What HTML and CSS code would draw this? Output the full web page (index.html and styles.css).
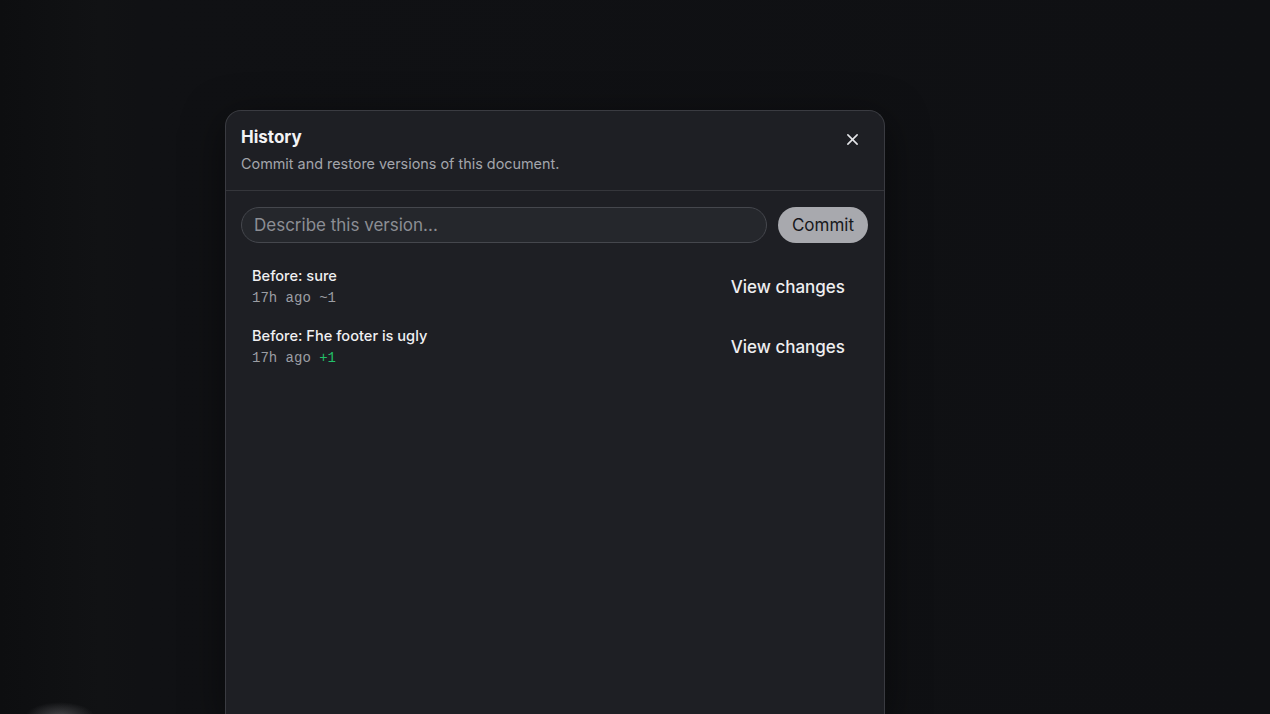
FILE: index.html
```html
<!DOCTYPE html>
<html>
<head>
    <title>History</title>
    <link rel="stylesheet" href="styles.css">
</head>
<body>
    <div class="glow"></div>

    <div class="dialog">
        <div class="dialog-header">
            <div>
                <h2 class="dialog-title">History</h2>
                <p class="dialog-desc">Commit and restore versions of this document.</p>
            </div>
            <button class="close-btn" aria-label="Close">
                <svg width="13" height="13" viewBox="0 0 14 14" fill="none" stroke="#e4e5e8" stroke-width="1.7" stroke-linecap="round">
                    <path d="M2 2 L12 12 M12 2 L2 12"/>
                </svg>
            </button>
        </div>

        <div class="dialog-body">
            <form class="commit-form">
                <input type="text" class="commit-input" placeholder="Describe this version...">
                <button type="button" class="commit-btn">Commit</button>
            </form>

            <ul class="version-list">
                <li class="version">
                    <div class="version-info">
                        <div class="version-name">Before: sure</div>
                        <div class="version-meta">17h ago <span class="diff">~1</span></div>
                    </div>
                    <button class="view-btn">View changes</button>
                </li>
                <li class="version">
                    <div class="version-info">
                        <div class="version-name">Before: Fhe footer is ugly</div>
                        <div class="version-meta">17h ago <span class="diff added">+1</span></div>
                    </div>
                    <button class="view-btn">View changes</button>
                </li>
            </ul>
        </div>
    </div>
</body>
</html>
```

FILE: styles.css
```css
body {
    font-family: Inter, "Liberation Sans", sans-serif;
    background-color: #0f1013;
    background-image: linear-gradient(90deg, #0d0e10 0px, #111214 100px, #101114 140px, #0f1013 100%);
    margin: 0;
    padding: 110px 0 0 225px;
    height: 100vh;
    box-sizing: border-box;
    overflow: hidden;
    color: #ececee;
}

.glow {
    position: absolute;
    left: 25px;
    top: 702px;
    width: 70px;
    height: 30px;
    border-radius: 50%;
    background: radial-gradient(ellipse at center, rgba(200, 200, 205, 0.3), rgba(200, 200, 205, 0) 70%);
}

.dialog {
    width: 660px;
    height: 100%;
    box-sizing: border-box;
    background-color: #1e1f24;
    border: 1px solid #3a3b41;
    border-bottom: none;
    border-radius: 16px 16px 0 0;
    box-shadow: 0 10px 40px rgba(0, 0, 0, 0.5);
}

.dialog-header {
    display: flex;
    justify-content: space-between;
    align-items: flex-start;
    padding: 16px 15px;
    border-bottom: 1px solid #35363b;
}

.dialog-title {
    margin: 0;
    font-size: 17px;
    line-height: 20px;
    font-weight: 650;
    color: #f3f3f5;
}

.dialog-desc {
    margin: 7px 0 0;
    font-size: 14.4px;
    line-height: 20px;
    color: #a3a5ab;
}

.close-btn {
    background: none;
    border: none;
    padding: 4px;
    margin: 2px 6px 0 0;
    cursor: pointer;
    display: flex;
}

.dialog-body {
    padding: 16px 16px 16px 15px;
}

.commit-form {
    display: flex;
    gap: 11px;
    margin: 0;
}

.commit-input {
    flex: 1;
    height: 36px;
    box-sizing: border-box;
    border: 1px solid #45474d;
    border-radius: 18px;
    background-color: #25272c;
    padding: 0 12px;
    font-family: inherit;
    font-size: 17px;
    color: #ececee;
    outline: none;
}

.commit-input::placeholder {
    color: #8c8e94;
}

.commit-btn {
    width: 90px;
    height: 36px;
    border: none;
    border-radius: 18px;
    background-color: #a8a9ae;
    color: #17181b;
    font-family: inherit;
    font-size: 17px;
    cursor: pointer;
}

.version-list {
    list-style: none;
    margin: 15px 0 0;
    padding: 0;
}

.version {
    display: flex;
    justify-content: space-between;
    align-items: center;
    padding: 8px 11px;
    margin-bottom: 2px;
}

.version-name {
    font-size: 14.6px;
    line-height: 20px;
    font-weight: 500;
    color: #f0f0f2;
}

.version-meta {
    margin-top: 2px;
    font-family: "Liberation Mono", "DejaVu Sans Mono", monospace;
    font-size: 14px;
    line-height: 20px;
    color: #9b9da3;
}

.diff.added {
    color: #22c069;
}

.view-btn {
    background: none;
    border: none;
    padding: 0 12px;
    font-family: inherit;
    font-size: 17px;
    font-weight: 500;
    color: #eeeef0;
    cursor: pointer;
}
```
